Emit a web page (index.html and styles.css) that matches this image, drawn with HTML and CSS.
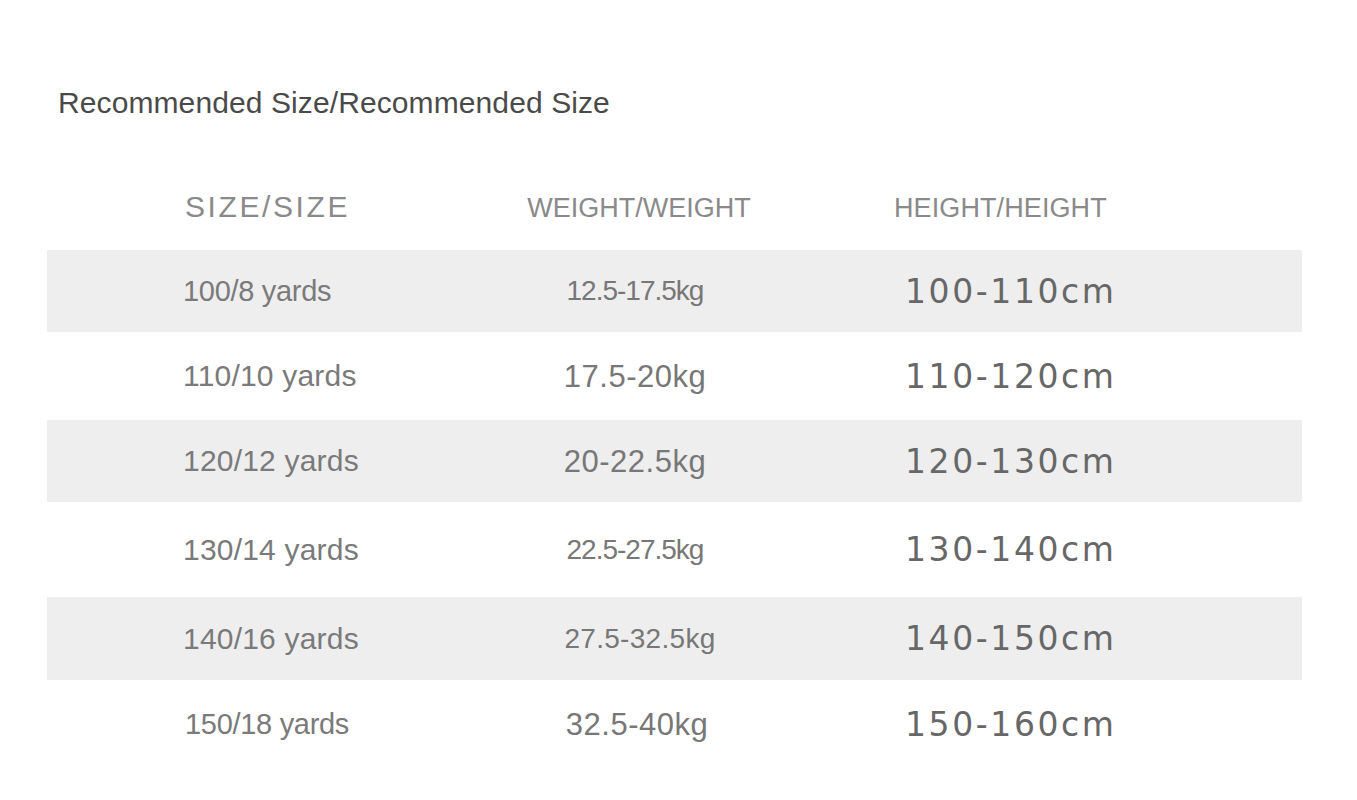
FILE: index.html
```html
<!DOCTYPE html>
<html lang="en">
<head>
<meta charset="utf-8">
<title>Recommended Size</title>
<link rel="stylesheet" href="styles.css">
</head>
<body>
<main class="page">
  <h1 class="title">Recommended Size/Recommended Size</h1>
  <div class="chart">
    <div class="row head">
      <div class="cell c-size h-size">SIZE/SIZE</div>
      <div class="cell c-weight h-weight">WEIGHT/WEIGHT</div>
      <div class="cell c-height h-height">HEIGHT/HEIGHT</div>
    </div>
    <div class="row shade r1">
      <div class="cell c-size s-small">100/8 yards</div>
      <div class="cell c-weight w-small">12.5-17.5kg</div>
      <div class="cell c-height">100-110cm</div>
    </div>
    <div class="row r2">
      <div class="cell c-size">110/10 yards</div>
      <div class="cell c-weight w-big">17.5-20kg</div>
      <div class="cell c-height">110-120cm</div>
    </div>
    <div class="row shade r3">
      <div class="cell c-size">120/12 yards</div>
      <div class="cell c-weight w-big">20-22.5kg</div>
      <div class="cell c-height">120-130cm</div>
    </div>
    <div class="row r4">
      <div class="cell c-size">130/14 yards</div>
      <div class="cell c-weight w-small">22.5-27.5kg</div>
      <div class="cell c-height">130-140cm</div>
    </div>
    <div class="row shade r5">
      <div class="cell c-size">140/16 yards</div>
      <div class="cell c-weight w-mid">27.5-32.5kg</div>
      <div class="cell c-height">140-150cm</div>
    </div>
    <div class="row r6">
      <div class="cell c-size s-small s-last">150/18 yards</div>
      <div class="cell c-weight w-big w-last">32.5-40kg</div>
      <div class="cell c-height">150-160cm</div>
    </div>
  </div>
</main>
</body>
</html>
```
FILE: styles.css
```css
html, body {
  margin: 0;
  padding: 0;
  background: #ffffff;
}

.page {
  padding: 85px 55px 0 47px;
  font-family: "Liberation Sans", Arial, sans-serif;
}

.title {
  margin: 0 0 0 11px;
  font-size: 30px;
  line-height: 36px;
  font-weight: normal;
  letter-spacing: 0.1px;
  color: #4a4a4a;
}

.chart {
  display: flex;
  flex-direction: column;
}

.row {
  display: grid;
  grid-template-columns: 436px 304px 1fr;
  align-items: center;
}

.shade {
  background: #eeeeee;
}

.head {
  height: 129px;
  align-items: end;
}

.r1 { height: 82px; }
.r2 { height: 88px; }
.r3 { height: 82px; }
.r4 { height: 95px; }
.r5 { height: 83px; }
.r6 { height: 88px; }

.cell {
  white-space: nowrap;
  line-height: 1;
}

.c-size {
  padding-left: 136px;
  font-size: 30px;
  letter-spacing: 0.2px;
  color: #7a7a7a;
}

.s-small {
  font-size: 29px;
  letter-spacing: -0.3px;
}

.s-last {
  padding-left: 138px;
}

.c-weight {
  text-align: center;
  font-size: 30px;
  letter-spacing: -0.6px;
  color: #777777;
}

.w-small {
  font-size: 28px;
  letter-spacing: -1px;
}

.w-mid {
  font-size: 28px;
  letter-spacing: 0.3px;
  padding-left: 10px;
}

.w-big {
  font-size: 31px;
  letter-spacing: 0.5px;
}

.w-last {
  padding-left: 4px;
}

.c-height {
  padding-left: 118px;
  font-family: "DejaVu Sans", Verdana, sans-serif;
  font-size: 33px;
  letter-spacing: 2.6px;
  color: #676767;
}

.head .cell {
  padding-bottom: 28px;
  color: #8a8a8a;
  font-family: "Liberation Sans", Arial, sans-serif;
}

.h-size {
  font-size: 30px;
  letter-spacing: 2.6px;
  padding-left: 138px;
}

.h-weight {
  font-size: 27px;
  letter-spacing: 0;
  padding-left: 8px;
  padding-bottom: 34px;
}

.h-height {
  font-size: 27px;
  letter-spacing: 0.1px;
  padding-left: 107px;
  padding-bottom: 32px;
}
```
